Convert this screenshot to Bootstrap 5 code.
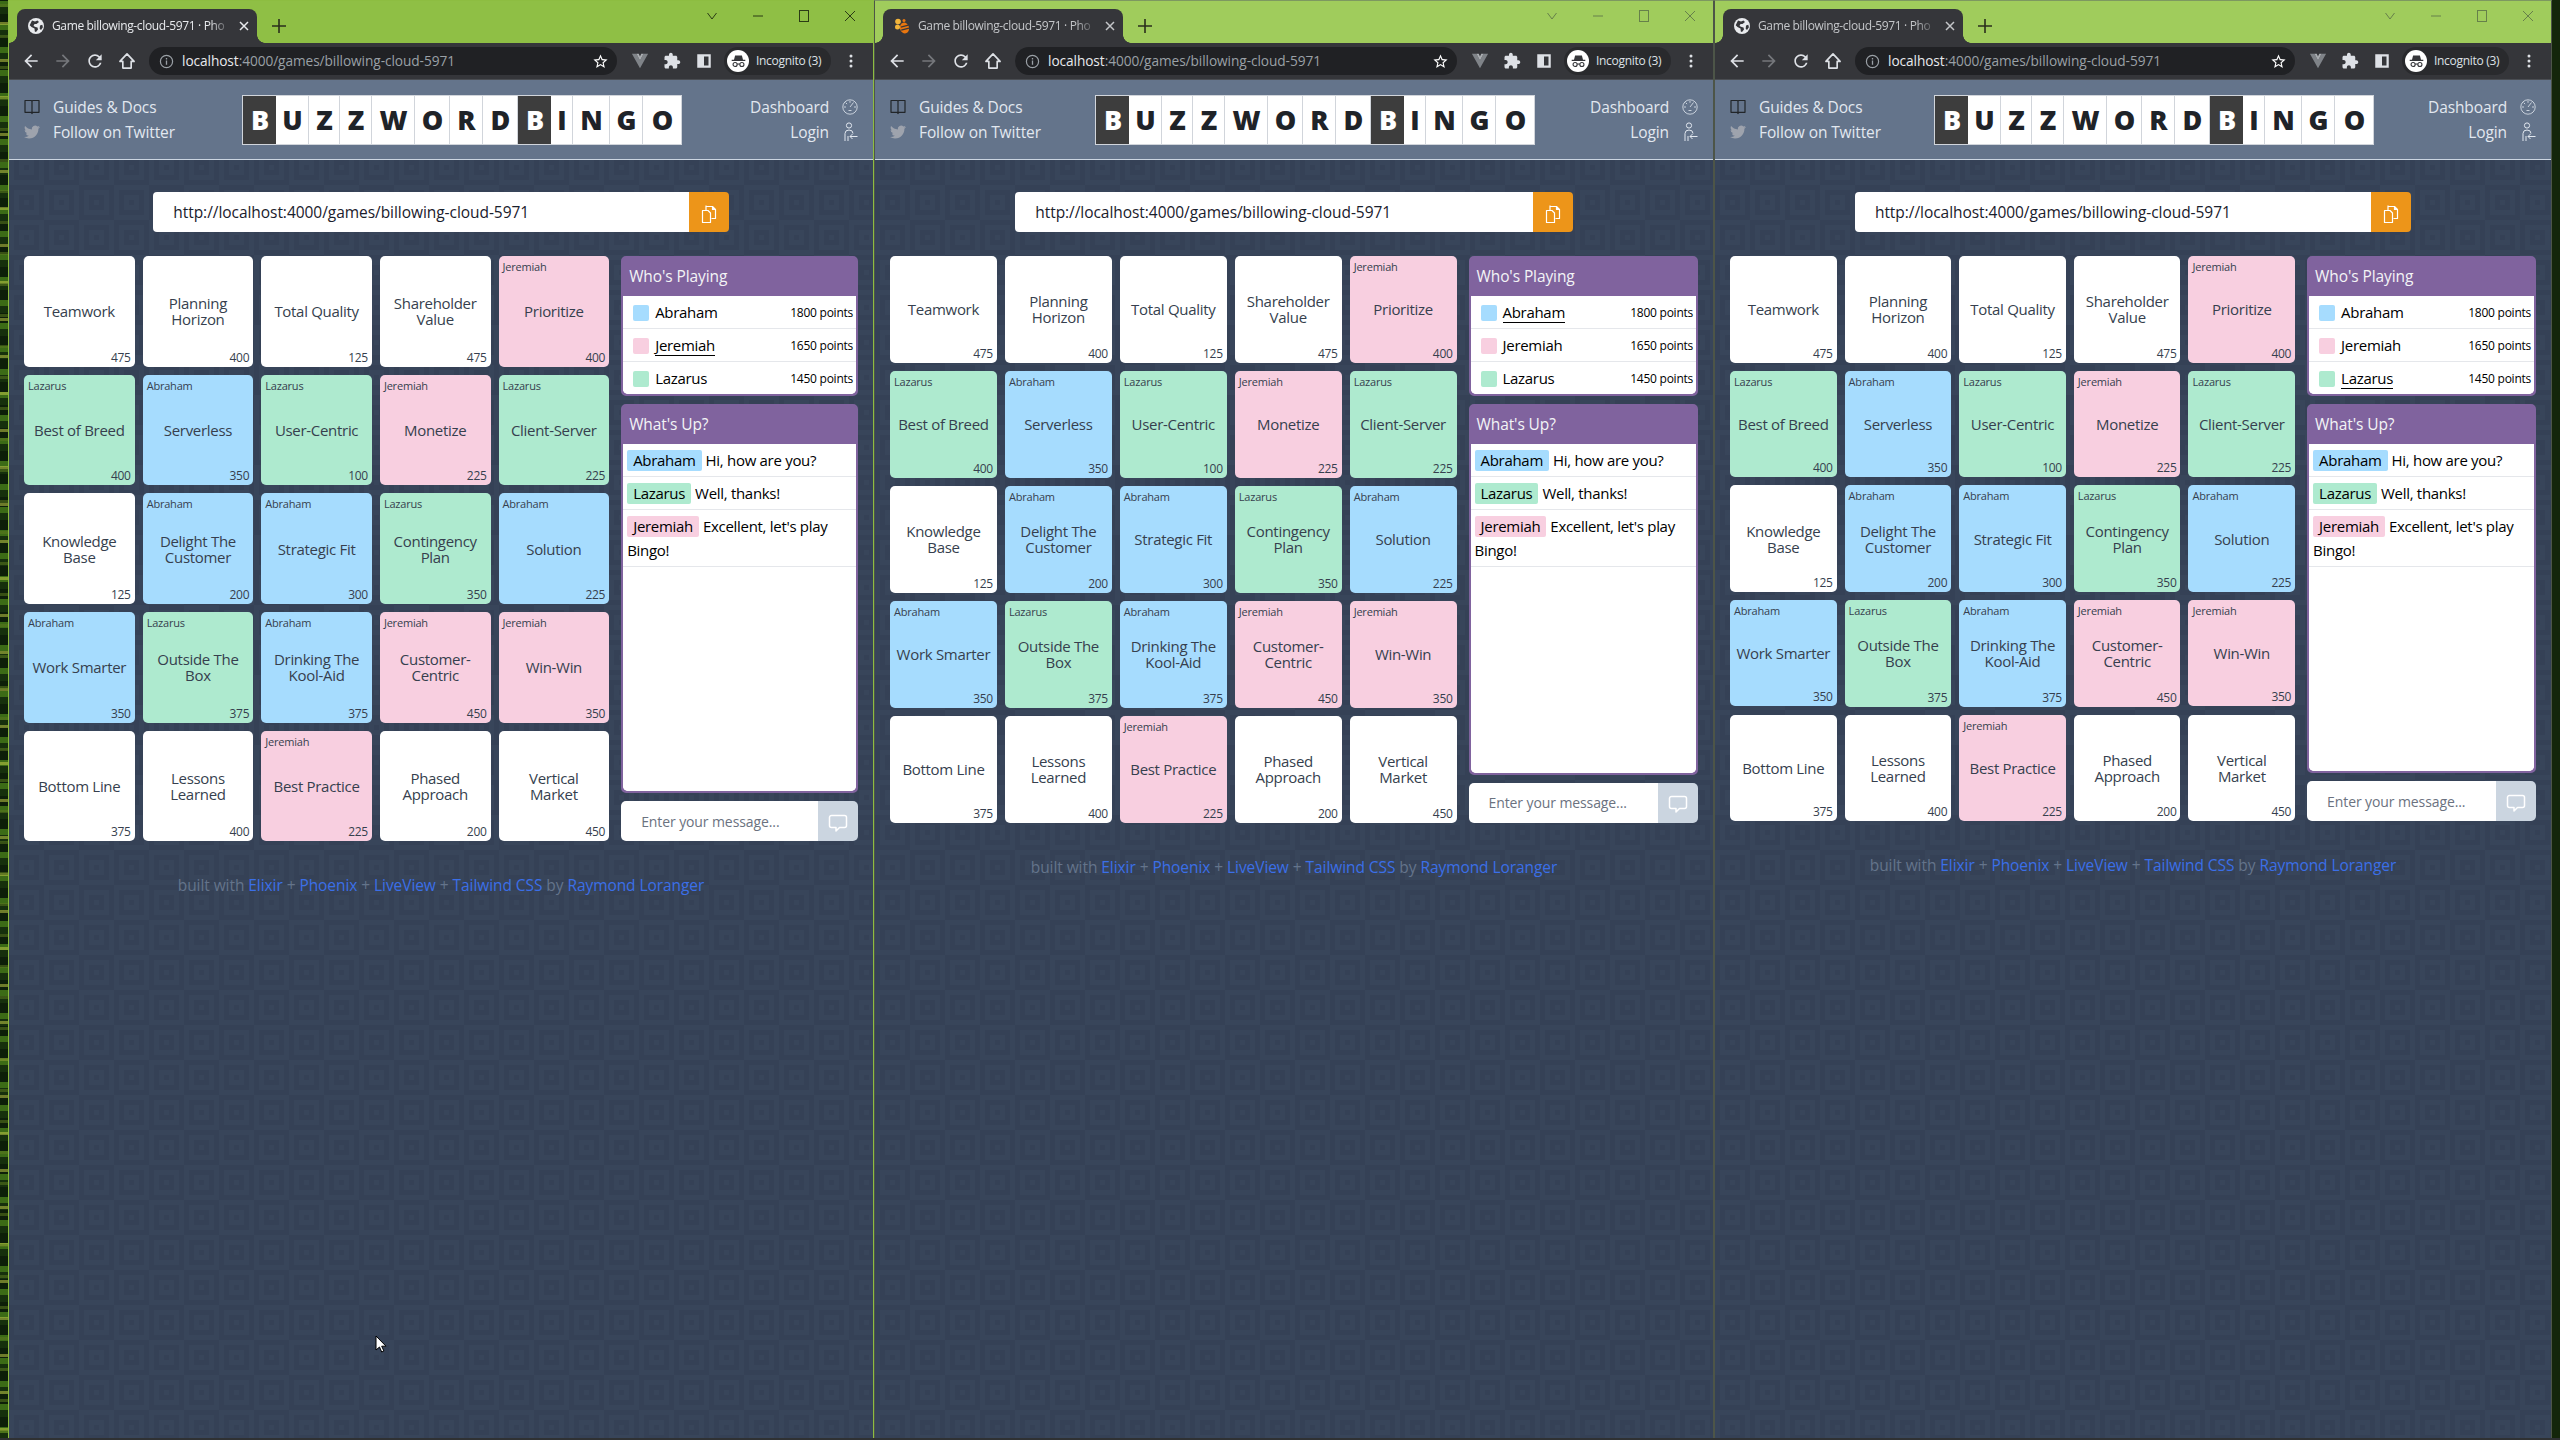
<!DOCTYPE html>
<html lang="en">
<head>
  <meta charset="UTF-8">
  <meta name="viewport" content="width=device-width, initial-scale=1.0">
  <title>Buzzword Bingo</title>
  <link href="https://cdn.jsdelivr.net/npm/bootstrap@5.3.0/dist/css/bootstrap.min.css" rel="stylesheet">
  <style>
    html, body { height: 100%; }
    body {
      font-family: "Open Sans", "Noto Sans", sans-serif;
      background-color: #14260b;
      background-image:
        repeating-linear-gradient(0deg, transparent 0 7px, rgba(90,120,30,.55) 7px 10px, transparent 10px 31px),
        repeating-linear-gradient(0deg, transparent 0 9px, rgba(190,200,70,.55) 9px 12px, transparent 12px 37px),
        repeating-linear-gradient(0deg, #16300c 0 7px, #3c6b16 7px 13px, #0d1f08 13px 23px);
      background-size: 50% 100%, 50% 100%, 50% 100%;
      background-repeat: no-repeat;
      overflow: hidden;
    }
    .desk { height: 1438px; padding: 0 8px; }
    .taskline { height: 2px; background: #2f3133; }

    /* browser window */
    .win { border: 1px solid #8dbd41; border-bottom: 0; min-width: 0; }
    .win-one { width: 866px; }
    .win-two { width: 840px; }
    .win-three { width: 838px; }
    .win.is-idle { border-color: #4d5548; border-top-color: #7d9860; }
    .tabstrip { height: 42px; background: #8fbf45; color: #2b3b15; }
    .is-idle .tabstrip { background: #a0cc5c; color: #66804a; }
    .tabshape {
      position: relative; width: 240px; height: 34px; margin: 8px 0 0 8px; padding: 0 8px 0 11px;
      background: #35363a; border-radius: 8px 8px 0 0; color: #e8eaed; font-size: 12px;
    }
    .is-idle .tabshape { color: #c4c6c9; }
    .tabshape::before, .tabshape::after {
      content: ""; position: absolute; bottom: 0; width: 8px; height: 8px;
      background: radial-gradient(circle at 0 0, transparent 7.5px, #35363a 8px);
    }
    .tabshape::before { left: -8px; }
    .tabshape::after { right: -8px; transform: scaleX(-1); }
    .tabname {
      flex: 1; min-width: 0; white-space: nowrap; letter-spacing: -.35px;
      -webkit-mask-image: linear-gradient(90deg, #000 88%, transparent);
      mask-image: linear-gradient(90deg, #000 88%, transparent);
    }
    .tabadd { width: 28px; height: 34px; margin-left: 8px; margin-top: 8px; display: flex; align-items: center; justify-content: center; color: #2a2e1c; }
    .winctl { width: 46px; height: 30px; display: flex; align-items: center; justify-content: center; }
    .toolrow { height: 37px; background: #35363a; padding: 0 6px; border-bottom: 1px solid #4a4d52; }
    .toolbtn { width: 32px; height: 32px; flex: none; display: flex; align-items: center; justify-content: center; color: #dee1e6; }
    .toolbtn.is-off { color: #75777b; }
    .omnibox {
      flex: 1; min-width: 0; height: 28px; margin: 0 7px 0 6px; padding: 0 8px 0 10px;
      border-radius: 14px; background: #202124; color: #9aa0a6; font-size: 13.7px; letter-spacing: -.08px;
    }
    .omnibox b { font-weight: 400; color: #e8eaed; }
    .omnibox svg { flex: none; }
    .incog { width: 107px; height: 28px; margin-left: 4px; flex: none; border-radius: 14px; background: #292a2d; color: #dee1e6; font-size: 12px; letter-spacing: -.3px; }
    .incog-dot { width: 22px; height: 22px; margin: 0 7px 0 3px; border-radius: 50%; background: #fff; color: #35363a; display: flex; align-items: center; justify-content: center; }

    /* app header */
    .apphead { height: 80px; background: #64748b; border-bottom: 1px solid #cbd5e1; padding: 0 15px; color: #e2e8f0; font-size: 15.5px; line-height: 25px; }
    .headlink { display: flex; align-items: center; gap: 13px; white-space: nowrap; letter-spacing: -.12px; }
    .headlink svg { flex: none; }
    .logo-box {
      display: grid; width: 440px; height: 50px; border: 1px solid #d1d5db; background: #fff; flex: none; align-self: center;
      grid-template-columns: 33px 33px 31px 32px 43px 35px 33px 35px 33px 22px 37px 33px 38px;
      font-weight: 800; font-size: 27px; color: #1f2328; line-height: 1;
    }
    .logo-box span { display: flex; align-items: center; justify-content: center; border-right: 1px solid #d1d5db; }
    .logo-box span:last-child { border-right: 0; }
    .logo-box .logo-dark { background: #3d3d3d; color: #fff; border-right: 0; }

    /* app body */
    .appbody {
      flex: 1; padding: 32px 15px 0;
      background-color: #374358;
      background-image: url("data:image/svg+xml,%3Csvg xmlns='http://www.w3.org/2000/svg' width='70' height='70'%3E%3Cdefs%3E%3Cg id='a'%3E%3Crect width='35' height='35' fill='%2338455a'/%3E%3Crect x='5' y='5' width='25' height='25' fill='%23354156'/%3E%3Crect x='10' y='10' width='15' height='15' fill='%2338455a'/%3E%3Crect x='15' y='15' width='5' height='5' fill='%23354156'/%3E%3C/g%3E%3Cg id='b'%3E%3Crect width='35' height='35' fill='%23354156'/%3E%3Crect x='5' y='5' width='25' height='25' fill='%2338455a'/%3E%3Crect x='10' y='10' width='15' height='15' fill='%23354156'/%3E%3Crect x='15' y='15' width='5' height='5' fill='%2338455a'/%3E%3C/g%3E%3C/defs%3E%3Cuse href='%23a'/%3E%3Cuse href='%23b' x='35'/%3E%3Cuse href='%23b' y='35'/%3E%3Cuse href='%23a' x='35' y='35'/%3E%3C/svg%3E");
      background-position: 0 -10px;
    }
    .linkbar { width: 69%; margin: 0 auto 24px; height: 40px; }
    .linkbar .form-control {
      border: 0; border-radius: 4px 0 0 4px; padding: 1px 20px 0; font-size: 15.5px; color: #1a202c; letter-spacing: -.05px; background: #fff;
    }
    .linkbar .btn { width: 40px; padding: 0; border: 0; border-radius: 0 4px 4px 0; background: #ed9519; color: #fff; }
    .boardgrid { flex: 1; min-width: 0; display: grid; grid-template-columns: repeat(5, minmax(0, 1fr)); gap: 8px; }
    .cell {
      aspect-ratio: 1 / 1; padding: 3px 4px 1px; border-radius: 5px; color: #363f4e; background: #fff;
      display: flex; flex-direction: column; font-size: 15px; line-height: 16px; text-align: center; letter-spacing: -.3px;
    }
    .cell-owner { height: 16px; font-size: 11px; text-align: left; letter-spacing: -.2px; }
    .cell-name { flex: 1; padding-bottom: 2px; display: flex; align-items: center; justify-content: center; }
    .cell-pts { height: 16px; font-size: 12px; text-align: right; letter-spacing: -.3px; }
    .tone-abraham { background: #a6dcfe; }
    .tone-jeremiah { background: #f8cfe0; }
    .tone-lazarus { background: #aeeacf; }
    .sidecol { flex: 0 0 28.4%; margin-left: 12px; display: flex; flex-direction: column; }
    .panel-box { border: 2px solid #80639e; border-radius: 5px; background: #80639e; overflow: hidden; color: #000; --bs-card-border-width: 0; }
    .panel-box .card-header {
      height: 38px; padding: 0 8px 0 6px; display: flex; align-items: center; border: 0; border-radius: 0;
      background: #80639e; color: #f3f4f6; font-size: 15.5px; letter-spacing: -.1px;
    }
    .panel-box .list-group { border-radius: 0 0 3px 3px; background: #fff; font-size: 15px; line-height: 24px; letter-spacing: -.3px; }
    .score-row { height: 33px; padding: 1px 3px 0 10px; border-color: #e5e7eb; color: #000; }
    .score-row:last-child { height: 32px; }
    .swatch { width: 16px; height: 16px; border-radius: 2px; margin-right: 6px; flex: none; }
    .score-name { border-bottom: 1px solid transparent; line-height: 20px; }
    .score-name.is-me { border-bottom-color: #000; }
    .score-pts { margin-left: auto; font-size: 12px; letter-spacing: -.25px; }
    .msg-row { padding: 4px; border-color: #e5e7eb; color: #000; }
    .msg-tag { display: inline-block; padding: 0 6px; margin-right: 4px; border-radius: 2px; line-height: 21px; }
    .talk-box { flex: 1; margin-top: 8px; min-height: 0; display: flex; flex-direction: column; }
    .talk-box .list-group { flex: 1; }
    .talk-input { height: 40px; margin-top: 8px; }
    .talk-input .form-control {
      border: 0; border-radius: 5px 0 0 5px; padding: 0 20px; font-size: 14px; background: #fff; letter-spacing: -.1px;
    }
    .talk-input .form-control::placeholder { color: #6b7280; }
    .talk-input .btn { width: 40px; padding: 0; border: 0; border-radius: 0 5px 5px 0; background: #cbd5e0; color: #fff; }
    .appfoot { margin-top: 32px; font-size: 15.5px; line-height: 24px; color: #64748b; text-align: center; letter-spacing: -.07px; }
    .appfoot a { color: #3b6fe8; text-decoration: none; }
    .arrow-mark { position: absolute; left: 375px; top: 1335px; }
  </style>
</head>
<body>
  <svg width="0" height="0" class="position-absolute">
    <symbol id="i-back" viewBox="0 0 24 24"><path fill="currentColor" d="M20 11H7.830l5.590-5.590L12 4l-8 8 8 8 1.410-1.410L7.830 13H20v-2z"/></symbol>
    <symbol id="i-fwd" viewBox="0 0 24 24"><path fill="currentColor" d="M4 11h12.170l-5.590-5.590L12 4l8 8-8 8-1.410-1.410L16.170 13H4v-2z"/></symbol>
    <symbol id="i-reload" viewBox="0 0 24 24"><path fill="currentColor" d="M17.650 6.350A7.958 7.958 0 0012 4c-4.420 0-7.990 3.580-7.990 8s3.570 8 7.990 8c3.730 0 6.840-2.550 7.730-6h-2.080A5.990 5.990 0 0112 18c-3.310 0-6-2.690-6-6s2.690-6 6-6c1.660 0 3.140.690 4.220 1.780L13 11h7V4l-2.350 2.350z"/></symbol>
    <symbol id="i-home" viewBox="0 0 24 24"><path fill="none" stroke="currentColor" stroke-width="2" stroke-linejoin="round" d="M12 3.500 3.500 12.500H7v8h10v-8h3.500z"/></symbol>
    <symbol id="i-info" viewBox="0 0 16 16"><circle cx="8" cy="8" r="6.500" fill="none" stroke="currentColor" stroke-width="1.300"/><path fill="currentColor" d="M7.300 7h1.400v4.500H7.300zM7.300 4.300h1.400v1.500H7.300z"/></symbol>
    <symbol id="i-star" viewBox="0 0 24 24"><path fill="currentColor" d="M22 9.240l-7.190-.620L12 2 9.190 8.630 2 9.240l5.460 4.730L5.820 21 12 17.270 18.180 21l-1.630-7.030L22 9.240zM12 15.400l-3.760 2.270 1-4.280-3.320-2.880 4.380-.380L12 6.100l1.710 4.040 4.380.380-3.320 2.880 1 4.280L12 15.400z"/></symbol>
    <symbol id="i-vee" viewBox="0 0 20 20"><path fill="#7f8388" d="M1 2h5l4 7.500L14 2h5l-9 16z"/><path fill="#a9adb1" d="M6 2h2.600L10 5l1.400-3H14l-4 7.500z"/></symbol>
    <symbol id="i-puzzle" viewBox="0 0 24 24"><path fill="currentColor" d="M20.500 11H19V7c0-1.100-.9-2-2-2h-4V3.500C13 2.120 11.880 1 10.500 1S8 2.120 8 3.500V5H4c-1.100 0-1.990.9-1.990 2v3.800H3.500c1.490 0 2.700 1.210 2.700 2.700s-1.210 2.700-2.700 2.700H2V20c0 1.100.9 2 2 2h3.800v-1.500c0-1.490 1.210-2.700 2.700-2.700 1.490 0 2.700 1.210 2.700 2.700V22H17c1.100 0 2-.9 2-2v-4h1.500c1.380 0 2.500-1.120 2.500-2.500S21.880 11 20.500 11z"/></symbol>
    <symbol id="i-side" viewBox="0 0 16 16"><path fill="currentColor" fill-rule="evenodd" d="M2 2h12v12H2zM4 4v8h4V4z" transform="matrix(-1 0 0 1 16 0)"/></symbol>
    <symbol id="i-spy" viewBox="0 0 20 20"><path fill="currentColor" d="M6 3h8l1.300 5H18v1.400H2V8h2.700z"/><circle cx="6" cy="13.500" r="2.400" fill="none" stroke="currentColor" stroke-width="1.300"/><circle cx="14" cy="13.500" r="2.400" fill="none" stroke="currentColor" stroke-width="1.300"/><path stroke="currentColor" stroke-width="1.300" d="M8.400 13h3.200"/></symbol>
    <symbol id="i-dots" viewBox="0 0 16 16"><circle cx="8" cy="3" r="1.500" fill="currentColor"/><circle cx="8" cy="8" r="1.500" fill="currentColor"/><circle cx="8" cy="13" r="1.500" fill="currentColor"/></symbol>
    <symbol id="i-globe" viewBox="0 0 16 16"><circle cx="8" cy="8" r="8" fill="#e8eaed"/><path fill="#35363a" d="M4 2.500 7 3.500 9.500 2.500 11 4 8.500 6 6.500 6 5.500 8 7.500 9 9.500 9.500 10 11.500 8 14 6.800 13.500 6.500 10.500 3.500 9 1.700 7.200zM12 7.500l2.300-.8.600 2.500-1.900 2.800-1.300-1.300z"/></symbol>
    <symbol id="i-bee" viewBox="0 0 16 16"><ellipse cx="10.500" cy="10" rx="4.500" ry="5.500" fill="#e8760f" transform="rotate(-15 10.500 10)"/><path stroke="#35363a" stroke-width="1.200" d="M6.800 9.200l7.600-2M7.200 12.200l7.800-2"/><circle cx="4" cy="3.500" r="2.800" fill="#f3b53b"/><circle cx="3.500" cy="9" r="2.500" fill="#f3b53b"/><circle cx="10" cy="2.500" r="1.500" fill="#e8760f"/></symbol>
    <symbol id="i-book" viewBox="0 0 16 16"><path fill="none" stroke="currentColor" stroke-width="1.200" stroke-linejoin="round" d="M1 1.500h6.400L8 2.400l.6-.9H15v11.800H8.800L8 14.500l-.8-1.200H1zM8 2.400v12.100"/></symbol>
    <symbol id="i-bird" viewBox="0 0 24 24"><path fill="currentColor" d="M23.953 4.570a10 10 0 01-2.825.775 4.958 4.958 0 002.163-2.723c-.951.555-2.005.959-3.127 1.184a4.920 4.920 0 00-8.384 4.482C7.690 8.095 4.067 6.130 1.640 3.162a4.822 4.822 0 00-.666 2.475c0 1.710.870 3.213 2.188 4.096a4.904 4.904 0 01-2.228-.616v.060a4.923 4.923 0 003.946 4.827 4.996 4.996 0 01-2.212.085 4.936 4.936 0 004.604 3.417 9.867 9.867 0 01-6.102 2.105c-.390 0-.779-.023-1.170-.067a13.995 13.995 0 007.557 2.209c9.053 0 13.998-7.496 13.998-13.985 0-.210 0-.420-.015-.630A9.935 9.935 0 0024 4.590z"/></symbol>
    <symbol id="i-gauge" viewBox="0 0 16 16"><circle cx="8" cy="8" r="7.200" fill="none" stroke="currentColor" stroke-width=".8"/><path fill="none" stroke="currentColor" stroke-width=".8" d="M8 8l3.500-4.500M8 1.800v2M2 8h2M12 8h2M3.700 3.700l1.400 1.400M6.500 11.500h3"/></symbol>
    <symbol id="i-login" viewBox="0 0 16 20"><circle cx="7" cy="3.500" r="2.600" fill="none" stroke="currentColor" stroke-width="1"/><path fill="none" stroke="currentColor" stroke-width="1" d="M3 19V11.500Q3 8 7 8t4 3.500M15.500 14.500H8M10.500 12l-2.500 2.500 2.500 2.500M6 19v-5"/></symbol>
    <symbol id="i-copy" viewBox="0 0 16 20"><path fill="none" stroke="currentColor" stroke-width="1.200" stroke-linejoin="round" d="M5.500 2.500h6l3 3v9h-4M1.500 6.500h5.500l2.500 2.500v9.500h-8zM5 1.500v5M11.500 2.500v3h3"/></symbol>
    <symbol id="i-bubble" viewBox="0 0 20 20"><path fill="none" stroke="currentColor" stroke-width="1.500" stroke-linejoin="round" d="M3.500 2.500h13a2 2 0 012 2v8a2 2 0 01-2 2h-5l-3.500 3.500v-3.500h-4.500a2 2 0 01-2-2v-8a2 2 0 012-2z"/></symbol>
  </svg>

  <div class="desk d-flex" id="desk"></div>
  <div class="taskline"></div>
  <svg class="arrow-mark" width="12" height="19" viewBox="0 0 12 19"><path fill="#fff" stroke="#000" stroke-width="1" d="M1 1v14l3.500-3 2.200 5 2.200-1-2.200-4.800H11z"/></svg>

  <template id="winTpl">
    <section class="win d-flex flex-column">
      <div class="tabstrip d-flex align-items-start">
        <div class="tabshape d-flex align-items-center gap-2">
          <svg class="favicon flex-none" width="16" height="16"><use href="#i-globe"/></svg>
          <span class="tabname">Game billowing-cloud-5971 · Pho</span>
          <svg width="10" height="10" viewBox="0 0 10 10"><path stroke="currentColor" stroke-width="1.500" d="M1 1l8 8M9 1l-8 8"/></svg>
        </div>
        <div class="tabadd"><svg width="14" height="14" viewBox="0 0 14 14"><path stroke="currentColor" stroke-width="1.600" d="M7 0v14M0 7h14"/></svg></div>
        <div class="ms-auto d-flex">
          <div class="winctl"><svg width="12" height="12" viewBox="0 0 12 12"><path fill="none" stroke="currentColor" d="M1.500 3 6 9l4.500-6"/></svg></div>
          <div class="winctl"><svg width="12" height="12" viewBox="0 0 12 12"><path stroke="currentColor" d="M1 6h10"/></svg></div>
          <div class="winctl"><svg width="12" height="12" viewBox="0 0 12 12"><rect x="1.500" y=".5" width="9" height="11" fill="none" stroke="currentColor"/></svg></div>
          <div class="winctl"><svg width="12" height="12" viewBox="0 0 12 12"><path stroke="currentColor" d="M1 1l10 10M11 1 1 11"/></svg></div>
        </div>
      </div>
      <div class="toolrow d-flex align-items-center">
        <div class="toolbtn"><svg width="20" height="20"><use href="#i-back"/></svg></div>
        <div class="toolbtn is-off"><svg width="20" height="20"><use href="#i-fwd"/></svg></div>
        <div class="toolbtn"><svg width="20" height="20"><use href="#i-reload"/></svg></div>
        <div class="toolbtn"><svg width="20" height="20"><use href="#i-home"/></svg></div>
        <div class="omnibox d-flex align-items-center">
          <svg class="me-2" width="15" height="15"><use href="#i-info"/></svg>
          <span class="flex-grow-1 text-nowrap"><b>localhost</b>:4000/games/billowing-cloud-5971</span>
          <svg class="text-white" width="17" height="17"><use href="#i-star"/></svg>
        </div>
        <div class="toolbtn"><svg width="18" height="18"><use href="#i-vee"/></svg></div>
        <div class="toolbtn"><svg width="18" height="18"><use href="#i-puzzle"/></svg></div>
        <div class="toolbtn"><svg width="18" height="18"><use href="#i-side"/></svg></div>
        <div class="incog d-flex align-items-center">
          <span class="incog-dot"><svg width="17" height="17"><use href="#i-spy"/></svg></span>Incognito (3)
        </div>
        <div class="toolbtn ms-1"><svg width="16" height="16"><use href="#i-dots"/></svg></div>
      </div>
      <header class="apphead d-flex justify-content-between align-items-center">
        <div>
          <div class="headlink"><svg class="text-dark" width="16" height="16"><use href="#i-book"/></svg>Guides &amp; Docs</div>
          <div class="headlink"><svg class="bird-icon" width="16" height="16"><use href="#i-bird"/></svg>Follow on Twitter</div>
        </div>
        <div class="logo-box"></div>
        <div>
          <div class="headlink justify-content-end">Dashboard<svg width="16" height="16"><use href="#i-gauge"/></svg></div>
          <div class="headlink justify-content-end">Login<svg width="16" height="20"><use href="#i-login"/></svg></div>
        </div>
      </header>
      <main class="appbody d-flex flex-column">
        <div class="linkbar input-group">
          <input class="form-control" type="text" value="http://localhost:4000/games/billowing-cloud-5971" readonly>
          <button class="btn" type="button"><svg width="16" height="20"><use href="#i-copy"/></svg></button>
        </div>
        <div class="d-flex">
          <div class="boardgrid"></div>
          <aside class="sidecol">
            <div class="card panel-box">
              <div class="card-header">Who's Playing</div>
              <ul class="list-group list-group-flush score-list"></ul>
            </div>
            <div class="card panel-box talk-box">
              <div class="card-header">What's Up?</div>
              <ul class="list-group list-group-flush talk-list"></ul>
            </div>
            <div class="talk-input input-group">
              <input class="form-control" type="text" placeholder="Enter your message...">
              <button class="btn" type="button"><svg width="20" height="20"><use href="#i-bubble"/></svg></button>
            </div>
          </aside>
        </div>
        <footer class="appfoot">built with <a href="#">Elixir</a> + <a href="#">Phoenix</a> + <a href="#">LiveView</a> + <a href="#">Tailwind CSS</a> by <a href="#">Raymond Loranger</a></footer>
      </main>
    </section>
  </template>

  <script src="https://cdn.jsdelivr.net/npm/bootstrap@5.3.0/dist/js/bootstrap.bundle.min.js"></script>
  <script>
    const cells = [
      ['Teamwork', 475, ''], ['Planning Horizon', 400, ''], ['Total Quality', 125, ''], ['Shareholder Value', 475, ''], ['Prioritize', 400, 'Jeremiah'],
      ['Best of Breed', 400, 'Lazarus'], ['Serverless', 350, 'Abraham'], ['User-Centric', 100, 'Lazarus'], ['Monetize', 225, 'Jeremiah'], ['Client-Server', 225, 'Lazarus'],
      ['Knowledge Base', 125, ''], ['Delight The Customer', 200, 'Abraham'], ['Strategic Fit', 300, 'Abraham'], ['Contingency Plan', 350, 'Lazarus'], ['Solution', 225, 'Abraham'],
      ['Work Smarter', 350, 'Abraham'], ['Outside The Box', 375, 'Lazarus'], ['Drinking The Kool-Aid', 375, 'Abraham'], ['Customer-Centric', 450, 'Jeremiah'], ['Win-Win', 350, 'Jeremiah'],
      ['Bottom Line', 375, ''], ['Lessons Learned', 400, ''], ['Best Practice', 225, 'Jeremiah'], ['Phased Approach', 200, ''], ['Vertical<br>Market', 450, '']
    ];
    const scores = [['Abraham', 1800], ['Jeremiah', 1650], ['Lazarus', 1450]];
    const talk = [['Abraham', 'Hi, how are you?'], ['Lazarus', 'Well, thanks!'], ['Jeremiah', "Excellent, let's play Bingo!"]];
    const windows = [
      { cls: 'win-one', me: 'Jeremiah', icon: '#i-globe' },
      { cls: 'win-two is-idle', me: 'Abraham', icon: '#i-bee' },
      { cls: 'win-three is-idle', me: 'Lazarus', icon: '#i-globe' }
    ];

    const desk = document.getElementById('desk');
    const tpl = document.getElementById('winTpl');

    windows.forEach(w => {
      const node = tpl.content.cloneNode(true);
      node.querySelector('.win').className += ' ' + w.cls;
      node.querySelector('.favicon use').setAttribute('href', w.icon);
      node.querySelector('.bird-icon').style.color = '#9ea3ad';

      node.querySelector('.logo-box').innerHTML = 'BUZZWORDBINGO'.split('').map((ch, i) =>
        `<span class="${i === 0 || i === 8 ? 'logo-dark' : ''}">${ch}</span>`).join('');

      node.querySelector('.boardgrid').innerHTML = cells.map(([name, pts, owner]) => `
        <div class="cell ${owner ? 'tone-' + owner.toLowerCase() : ''}">
          <div class="cell-owner">${owner}</div>
          <div class="cell-name"><span>${name}</span></div>
          <div class="cell-pts">${pts}</div>
        </div>`).join('');

      node.querySelector('.score-list').innerHTML = scores.map(([name, pts]) => `
        <li class="list-group-item score-row d-flex align-items-center">
          <span class="swatch tone-${name.toLowerCase()}"></span>
          <span class="score-name ${name === w.me ? 'is-me' : ''}">${name}</span>
          <span class="score-pts">${pts} points</span>
        </li>`).join('');

      node.querySelector('.talk-list').innerHTML = talk.map(([name, text]) => `
        <li class="list-group-item msg-row"><span class="msg-tag tone-${name.toLowerCase()}">${name}</span>${text}</li>`).join('') +
        '<li class="list-group-item flex-grow-1 border-0"></li>';

      desk.appendChild(node);
    });
  </script>
</body>
</html>
